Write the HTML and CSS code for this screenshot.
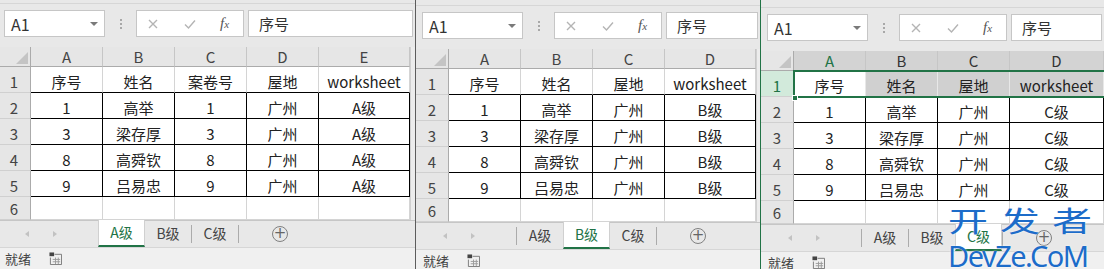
FILE: index.html
```html
<!DOCTYPE html>
<html lang="zh-CN">
<head>
    <meta charset="UTF-8">
    <meta name="viewport" content="width=device-width, initial-scale=1.0">
    <title>工作表拆分</title>
    <link rel="stylesheet" href="styles.css">
</head>
<body>
<div class="window">

    <!-- Window 1: A级 -->
    <div class="pane pane-a">
        <div class="formula-bar">
            <div class="name-box">A1<span class="caret"></span></div>
            <div class="grip"><i></i><i></i><i></i></div>
            <div class="fx-buttons">
                <svg class="btn" viewBox="0 0 14 14"><path d="M3 3l8 8M11 3l-8 8"/></svg>
                <svg class="btn" viewBox="0 0 14 14"><path d="M2 7.5l3.5 3.5L12 3.5"/></svg>
                <span class="fx">f<span>x</span></span>
            </div>
            <div class="fx-input">序号</div>
        </div>
        <div class="sheet-area">
            <table class="sheet">
                <colgroup>
                    <col class="col-head"><col class="col-std"><col class="col-std"><col class="col-std"><col class="col-std"><col class="col-wide">
                </colgroup>
                <tr class="head-row"><th class="corner"><span class="tri"></span></th><th>A</th><th>B</th><th>C</th><th>D</th><th>E</th></tr>
                <tr class="first"><th>1</th><td>序号</td><td>姓名</td><td>案卷号</td><td>屋地</td><td>worksheet</td></tr>
                <tr class="data"><th>2</th><td>1</td><td>高举</td><td>1</td><td>广州</td><td>A级</td></tr>
                <tr class="data"><th>3</th><td>3</td><td>梁存厚</td><td>3</td><td>广州</td><td>A级</td></tr>
                <tr class="data"><th>4</th><td>8</td><td>高舜钦</td><td>8</td><td>广州</td><td>A级</td></tr>
                <tr class="data"><th>5</th><td>9</td><td>吕易忠</td><td>9</td><td>广州</td><td>A级</td></tr>
                <tr class="last"><th>6</th><td></td><td></td><td></td><td></td><td></td></tr>
            </table>
            <div class="vstrip"></div>
        </div>
        <div class="tabs">
            <div class="nav"><span class="arrow-l"></span><span class="arrow-r"></span></div>
            <div class="tab active">A级</div>
            <div class="tab">B级</div>
            <span class="sep"></span>
            <div class="tab">C级</div>
            <span class="sep"></span>
            <span class="add">+</span>
        </div>
        <div class="status">
            <span class="ready">就绪</span>
            <svg class="macro" viewBox="0 0 14 14"><rect x="0.5" y="0.5" width="5" height="4" fill="#444"/><path d="M6 2.5h7.5v11H1.5V6" fill="none" stroke="#777"/><path d="M4 8h8M4 10.5h8M7 6v7M10 6v7" stroke="#999"/></svg>
        </div>
    </div>

    <div class="split"></div>

    <!-- Window 2: B级 -->
    <div class="pane pane-b">
        <div class="formula-bar">
            <div class="name-box">A1<span class="caret"></span></div>
            <div class="grip"><i></i><i></i><i></i></div>
            <div class="fx-buttons">
                <svg class="btn" viewBox="0 0 14 14"><path d="M3 3l8 8M11 3l-8 8"/></svg>
                <svg class="btn" viewBox="0 0 14 14"><path d="M2 7.5l3.5 3.5L12 3.5"/></svg>
                <span class="fx">f<span>x</span></span>
            </div>
            <div class="fx-input">序号</div>
        </div>
        <div class="sheet-area">
            <table class="sheet">
                <colgroup>
                    <col class="col-head"><col class="col-std"><col class="col-std"><col class="col-std"><col class="col-wide">
                </colgroup>
                <tr class="head-row"><th class="corner"><span class="tri"></span></th><th>A</th><th>B</th><th>C</th><th>D</th></tr>
                <tr class="first"><th>1</th><td>序号</td><td>姓名</td><td>屋地</td><td>worksheet</td></tr>
                <tr class="data"><th>2</th><td>1</td><td>高举</td><td>广州</td><td>B级</td></tr>
                <tr class="data"><th>3</th><td>3</td><td>梁存厚</td><td>广州</td><td>B级</td></tr>
                <tr class="data"><th>4</th><td>8</td><td>高舜钦</td><td>广州</td><td>B级</td></tr>
                <tr class="data"><th>5</th><td>9</td><td>吕易忠</td><td>广州</td><td>B级</td></tr>
                <tr class="last"><th>6</th><td></td><td></td><td></td><td></td></tr>
            </table>
            <div class="vstrip"></div>
        </div>
        <div class="tabs">
            <div class="nav"><span class="arrow-l"></span><span class="arrow-r"></span></div>
            <span class="sep"></span>
            <div class="tab">A级</div>
            <div class="tab active">B级</div>
            <div class="tab">C级</div>
            <span class="sep"></span>
            <span class="add">+</span>
        </div>
        <div class="status">
            <span class="ready">就绪</span>
            <svg class="macro" viewBox="0 0 14 14"><rect x="0.5" y="0.5" width="5" height="4" fill="#444"/><path d="M6 2.5h7.5v11H1.5V6" fill="none" stroke="#777"/><path d="M4 8h8M4 10.5h8M7 6v7M10 6v7" stroke="#999"/></svg>
        </div>
    </div>

    <div class="split split-active"></div>

    <!-- Window 3: C级, row 1 selected -->
    <div class="pane pane-c">
        <div class="formula-bar">
            <div class="name-box">A1<span class="caret"></span></div>
            <div class="grip"><i></i><i></i><i></i></div>
            <div class="fx-buttons">
                <svg class="btn" viewBox="0 0 14 14"><path d="M3 3l8 8M11 3l-8 8"/></svg>
                <svg class="btn" viewBox="0 0 14 14"><path d="M2 7.5l3.5 3.5L12 3.5"/></svg>
                <span class="fx">f<span>x</span></span>
            </div>
            <div class="fx-input">序号</div>
        </div>
        <div class="sheet-area">
            <table class="sheet">
                <colgroup>
                    <col class="col-head"><col class="col-std"><col class="col-std"><col class="col-std"><col class="col-last">
                </colgroup>
                <tr class="head-row"><th class="corner"><span class="tri"></span></th><th class="sel sel-active">A</th><th class="sel">B</th><th class="sel">C</th><th class="sel">D</th></tr>
                <tr class="first selected"><th class="sel-row">1</th><td class="cur">序号</td><td>姓名</td><td>屋地</td><td>worksheet</td></tr>
                <tr class="data"><th>2</th><td>1</td><td>高举</td><td>广州</td><td>C级</td></tr>
                <tr class="data"><th>3</th><td>3</td><td>梁存厚</td><td>广州</td><td>C级</td></tr>
                <tr class="data"><th>4</th><td>8</td><td>高舜钦</td><td>广州</td><td>C级</td></tr>
                <tr class="data"><th>5</th><td>9</td><td>吕易忠</td><td>广州</td><td>C级</td></tr>
                <tr class="last"><th>6</th><td></td><td></td><td></td><td></td></tr>
            </table>
            <div class="selection"></div>
            <div class="handle"></div>
        </div>
        <div class="tabs">
            <div class="nav"><span class="arrow-l"></span><span class="arrow-r"></span></div>
            <span class="sep"></span>
            <div class="tab">A级</div>
            <span class="sep"></span>
            <div class="tab">B级</div>
            <div class="tab active">C级</div>
            <span class="sep"></span>
            <span class="add">+</span>
        </div>
        <div class="status">
            <span class="ready">就绪</span>
            <svg class="macro" viewBox="0 0 14 14"><rect x="0.5" y="0.5" width="5" height="4" fill="#444"/><path d="M6 2.5h7.5v11H1.5V6" fill="none" stroke="#777"/><path d="M4 8h8M4 10.5h8M7 6v7M10 6v7" stroke="#999"/></svg>
        </div>

        <div class="watermark">
            <div class="wm-cn"><span>开</span><span>发</span><span>者</span></div>
            <div class="wm-en">DevZe.CoM</div>
        </div>
    </div>

</div>
</body>
</html>
```

FILE: styles.css
```css
* {
    margin: 0;
    padding: 0;
    box-sizing: border-box;
}

body {
    width: 1104px;
    height: 269px;
    overflow: hidden;
    background-color: #e8e8e8;
    font-family: "Noto Sans CJK SC", "Noto Sans", sans-serif;
    color: #222;
}

.window {
    display: flex;
    height: 269px;
}

/* Panes */
.pane {
    position: relative;
    display: flex;
    flex-direction: column;
    height: 269px;
    overflow: hidden;
    background-color: #e8e8e8;
    flex-shrink: 0;
}

.pane-a {
    width: 417px;
    margin-left: -2px;
}

.pane-b {
    width: 344px;
    padding-top: 2px;
}

.pane-c {
    flex: 1;
    padding-top: 4px;
}

.split {
    width: 1px;
    flex-shrink: 0;
    background-color: #5c5c5c;
}

.split-active {
    background-color: #217346;
}

/* Formula bar */
.formula-bar {
    display: flex;
    align-items: flex-start;
    height: 44px;
    margin-top: 3px;
    padding-top: 6px;
    border-top: 1px solid #d6d6d6;
    flex-shrink: 0;
}

.name-box {
    display: flex;
    align-items: center;
    width: 101px;
    height: 27px;
    margin-left: 6px;
    padding-left: 6px;
    background-color: #fff;
    border: 1px solid #c6c6c6;
    font-size: 16px;
    color: #333;
}

.caret {
    margin-left: auto;
    margin-right: 6px;
    border-left: 4px solid transparent;
    border-right: 4px solid transparent;
    border-top: 4px solid #7a7a7a;
}

.grip {
    display: flex;
    flex-direction: column;
    align-items: center;
    justify-content: center;
    gap: 2px;
    width: 31px;
    height: 27px;
}

.grip i {
    width: 2px;
    height: 2px;
    background-color: #a8a8a8;
}

.fx-buttons {
    display: flex;
    align-items: center;
    gap: 23px;
    width: 108px;
    height: 27px;
    padding-left: 9px;
    background-color: #fff;
    border: 1px solid #c6c6c6;
}

.btn {
    width: 14px;
    height: 14px;
    fill: none;
    stroke: #b4b4b4;
    stroke-width: 1.4;
}

.fx {
    font-family: "Liberation Serif", serif;
    font-style: italic;
    font-size: 15px;
    color: #555;
}

.fx span {
    font-size: 11px;
}

.fx-input {
    flex: 1;
    height: 27px;
    margin-left: 4px;
    margin-right: 2px;
    padding-left: 10px;
    background-color: #fff;
    border: 1px solid #c6c6c6;
    font-size: 15px;
    line-height: 25px;
    color: #333;
}

/* Sheet grid */
.sheet-area {
    position: relative;
    display: flex;
    flex-shrink: 0;
    background-color: #fff;
}

.sheet {
    border-collapse: separate;
    border-spacing: 0;
    background-color: #fff;
}

.col-head { width: 33px; }
.col-std { width: 72px; }
.col-wide { width: 91px; }
.col-last { width: 94px; }

.sheet th,
.sheet td {
    height: 26px;
    padding: 0;
    font-size: 15px;
    font-weight: 400;
    line-height: 20px;
    text-align: center;
    vertical-align: bottom;
    white-space: nowrap;
    overflow: hidden;
    border-right: 1px solid #d4d4d4;
    border-bottom: 1px solid #d4d4d4;
}

.sheet th {
    background-color: #e6e6e6;
    color: #444;
    border-right-color: #ababab;
    border-bottom-color: #d0d0d0;
}

.sheet .head-row th {
    height: 20px;
    padding: 0;
    line-height: 18px;
    vertical-align: middle;
    border-right-color: #c6c6c6;
    border-bottom-color: #ababab;
}

.sheet .head-row .corner {
    padding: 0 2px 2px 0;
    font-size: 0;
    line-height: 0;
    text-align: right;
    vertical-align: bottom;
    border-right-color: #ababab;
}

.tri {
    display: inline-block;
    vertical-align: bottom;
    border-left: 12px solid transparent;
    border-bottom: 12px solid #c4c4c4;
}

.sheet .first td {
    border-bottom-color: #000;
}

.sheet .data td {
    border-right-color: #000;
    border-bottom-color: #000;
}

.sheet .last th,
.sheet .last td {
    height: 23px;
}

.vstrip {
    flex: 1;
    background-color: #ececec;
    border-left: 1px solid #d0d0d0;
}

/* Row 1 selection in the active window */
.sheet .head-row th.sel {
    background-color: #d3d3d3;
    color: #333;
}

.sheet .head-row th.sel-active {
    color: #217346;
}

.sheet th.sel-row {
    background-color: #d2eadb;
    color: #217346;
}

.sheet .selected td {
    background-color: #d0d0d0;
    border-right-color: #e8e8e8;
}

.sheet .selected td.cur {
    background-color: #fff;
}

.selection {
    position: absolute;
    left: 32px;
    top: 19px;
    right: 0;
    height: 28px;
    border: 2px solid #217346;
    border-right: none;
    pointer-events: none;
}

.handle {
    position: absolute;
    left: 31px;
    top: 44px;
    width: 6px;
    height: 6px;
    background-color: #217346;
    border: 1px solid #fff;
}

/* Sheet tabs */
.tabs {
    display: flex;
    align-items: stretch;
    height: 27px;
    flex-shrink: 0;
    background-color: #e8e8e8;
    border-top: 1px solid #c6c6c6;
}

.nav {
    display: flex;
    align-items: center;
    width: 100px;
    padding-left: 27px;
    gap: 24px;
}

.arrow-l,
.arrow-r {
    border-top: 3px solid transparent;
    border-bottom: 3px solid transparent;
}

.arrow-l {
    border-right: 4px solid #c2c2c2;
}

.arrow-r {
    border-left: 4px solid #c2c2c2;
}

.tab {
    width: 46px;
    font-size: 14px;
    line-height: 24px;
    text-align: center;
    color: #444;
}

.tab.active {
    width: 47px;
    margin-top: -1px;
    background-color: #fff;
    color: #217346;
    border-left: 1px solid #d0d0d0;
    border-right: 1px solid #d0d0d0;
    border-bottom: 2px solid #217346;
}

.sep {
    width: 1px;
    align-self: center;
    height: 18px;
    background-color: #ababab;
}

.add {
    align-self: center;
    width: 16px;
    height: 16px;
    margin-left: 33px;
    border: 1px solid #808080;
    border-radius: 50%;
    font-size: 15px;
    line-height: 13px;
    text-align: center;
    color: #666;
    font-family: "DejaVu Sans", sans-serif;
}

/* Status bar */
.status {
    display: flex;
    align-items: center;
    height: 22px;
    flex-shrink: 0;
    padding-left: 7px;
    background-color: #f0f0f0;
    border-top: 1px solid #d6d6d6;
}

.ready {
    font-size: 13px;
    color: #444;
}

.macro {
    width: 13px;
    height: 13px;
    margin-left: 18px;
}

/* Site watermark */
.watermark {
    position: absolute;
    left: 187px;
    top: 205px;
    color: #1d6cc9;
    text-shadow: 0 0 2px #fff;
    pointer-events: none;
}

.wm-cn {
    display: flex;
    gap: 12px;
    font-size: 40px;
    line-height: 40px;
    transform: scaleY(0.72);
    transform-origin: left top;
}

.wm-en {
    margin-top: -5px;
    font-family: "Noto Sans", sans-serif;
    font-size: 29px;
    line-height: 32px;
    letter-spacing: -1.5px;
}
```
